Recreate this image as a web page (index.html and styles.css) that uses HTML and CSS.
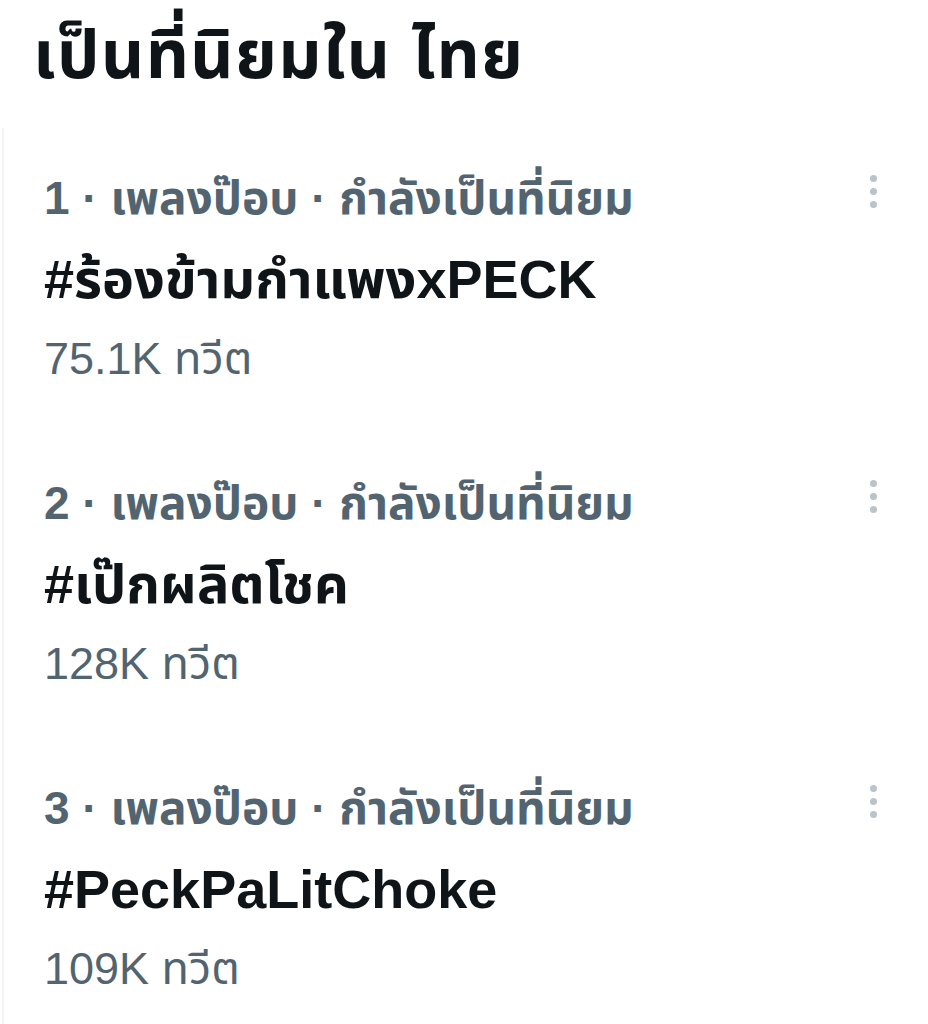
FILE: index.html
```html
<!DOCTYPE html>
<html lang="th">
<head>
<meta charset="utf-8">
<link rel="stylesheet" href="styles.css">
</head>
<body>
<div class="page">
  <h1 class="title">เป็นที่นิยมใน ไทย</h1>
  <div class="list">
    <div class="trend">
      <div class="info">
        <div class="meta">1 · เพลงป๊อบ · กำลังเป็นที่นิยม</div>
        <div class="tag">#ร้องข้ามกำแพงxPECK</div>
        <div class="count">75.1K ทวีต</div>
      </div>
      <div class="more"><span></span><span></span><span></span></div>
    </div>
    <div class="trend">
      <div class="info">
        <div class="meta">2 · เพลงป๊อบ · กำลังเป็นที่นิยม</div>
        <div class="tag">#เป๊กผลิตโชค</div>
        <div class="count">128K ทวีต</div>
      </div>
      <div class="more"><span></span><span></span><span></span></div>
    </div>
    <div class="trend">
      <div class="info">
        <div class="meta">3 · เพลงป๊อบ · กำลังเป็นที่นิยม</div>
        <div class="tag">#PeckPaLitChoke</div>
        <div class="count">109K ทวีต</div>
      </div>
      <div class="more"><span></span><span></span><span></span></div>
    </div>
  </div>
</div>
</body>
</html>
```
FILE: styles.css
```css
html, body {
  margin: 0;
  padding: 0;
  background: #ffffff;
}
body {
  font-family: "Liberation Sans", "Noto Sans", "Noto Sans Thai", sans-serif;
  color: #0f1419;
}
.page {
  width: 928px;
  height: 1024px;
  overflow: hidden;
}
.title {
  margin: 0;
  padding: 15px 0 0 33px;
  height: 113px;
  font-size: 67px;
  font-weight: 700;
  line-height: 80px;
  letter-spacing: 1.5px;
}
.list {
  margin-left: 2px;
  border-left: 2px solid #f1f3f4;
  height: 896px;
}
.trend {
  display: flex;
  justify-content: space-between;
  padding: 29px 0 0 40px;
  height: 276px;
}
.info {
  display: flex;
  flex-direction: column;
}
.meta {
  font-size: 46px;
  font-weight: 700;
  color: #536471;
  line-height: 82px;
  height: 82px;
}
.tag {
  font-size: 54px;
  font-weight: 700;
  color: #0f1419;
  line-height: 80px;
}
.count {
  font-size: 45px;
  color: #536471;
  line-height: 80px;
}
.more {
  display: flex;
  flex-direction: column;
  gap: 6px;
  padding: 18px 51px 0 0;
}
.more span {
  width: 7px;
  height: 7px;
  border-radius: 50%;
  background: #b9c3cb;
}
```
